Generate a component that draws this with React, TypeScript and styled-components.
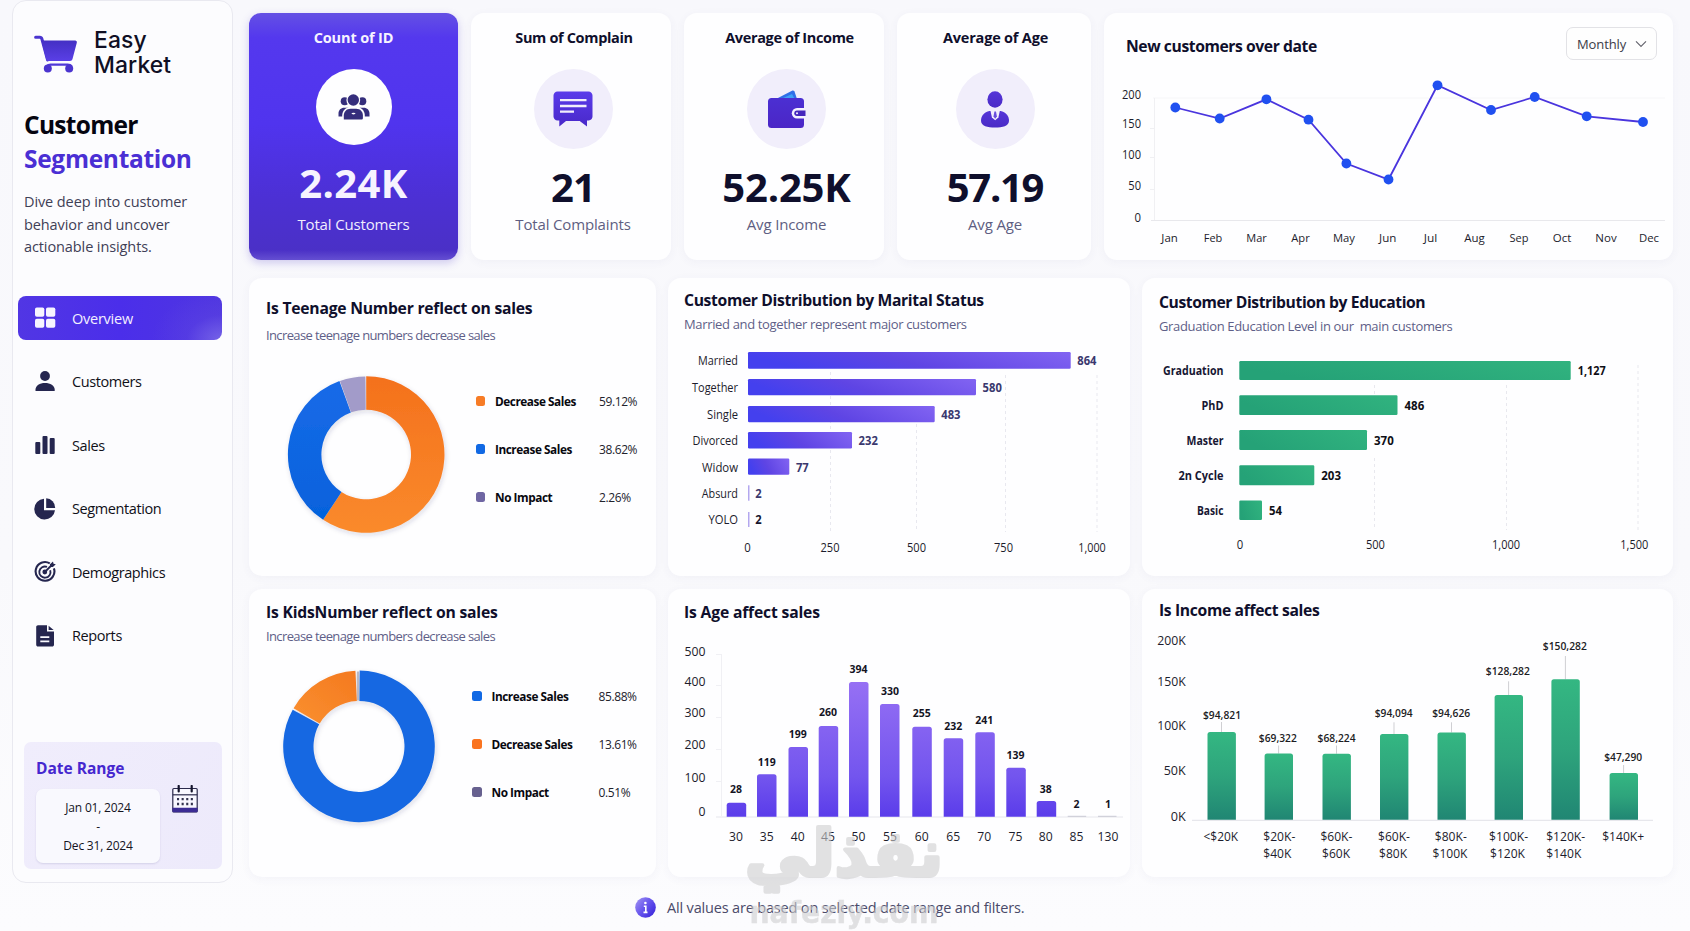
import React from 'react';
import styled, { createGlobalStyle, css } from 'styled-components';

const GlobalStyle = createGlobalStyle`
  * { box-sizing: border-box; }
  html, body { margin: 0; padding: 0; }
  body {
    font-family: 'Open Sans', 'Noto Sans', sans-serif;
    background: #fafafd;
    color: #0f0f2c;
  }
  h1, h2, h3, p, ul { margin: 0; padding: 0; }
`;

/* ---------- page ---------- */

const Page = styled.div`
  position: relative;
  display: flex;
  width: 1690px;
  height: 931px;
  overflow: hidden;
  background: linear-gradient(180deg, #f8f8fc 0%, #f9f9fc 60%, #fcfcfe 100%);
`;

const Main = styled.main`
  display: flex;
  flex-direction: column;
  width: 1425px;
  margin-left: 16px;
  padding-top: 13px;
`;

const TopRow = styled.section`
  display: grid;
  grid-template-columns: 209px 200px 200px 194px 569px;
  column-gap: 13px;
  height: 247px;
  margin-bottom: 18px;
`;

const ChartRow = styled.section<{ $h: number }>`
  display: grid;
  grid-template-columns: 407px 462px 531px;
  column-gap: 12px;
  height: ${(p) => p.$h}px;
  margin-bottom: 13px;
`;

/* ---------- sidebar ---------- */

const Sidebar = styled.aside`
  display: flex;
  flex-direction: column;
  width: 221px;
  height: 883px;
  margin-left: 12px;
  border: 1px solid #e9e9f0;
  border-radius: 14px;
  background: #fcfcfe;
`;

const Brand = styled.div`
  display: flex;
  gap: 16px;
  padding: 27px 0 0 21px;
`;

const BrandName = styled.div`
  font: 500 22.9px/25.4px Inter, sans-serif;
  letter-spacing: 0.1px;
  color: #0f0f24;
`;

const PageTitle = styled.h1`
  margin: 29.5px 0 0 11px;
  font-size: 24.5px;
  line-height: 34px;
  font-weight: 700;
  letter-spacing: -0.7px;
  color: #050510;
  span { display: block; color: #4a2fd4; letter-spacing: -0.3px; }
`;

const Intro = styled.p`
  margin: 14.5px 0 0 11px;
  width: 190px;
  font-size: 14.5px;
  line-height: 22.7px;
  letter-spacing: -0.1px;
  color: #3f4056;
`;

const Nav = styled.nav`
  display: flex;
  flex-direction: column;
  gap: 19.5px;
  margin: 37px 10px 0 5px;
`;

const NavItem = styled.a<{ $active?: boolean }>`
  display: flex;
  align-items: center;
  gap: 15px;
  height: 44px;
  padding: 1px 0 0 15px;
  border-radius: 8px;
  font-size: 14.5px;
  letter-spacing: -0.4px;
  color: #101018;
  ${(p) =>
    p.$active &&
    css`
      color: #f3f0ff;
      letter-spacing: -0.25px;
      background: radial-gradient(ellipse 70px 50px at 100% 100%, rgba(124, 107, 232, 0.85) 0%, rgba(100, 76, 226, 0.3) 50%, rgba(80, 54, 224, 0) 100%), linear-gradient(90deg, #5136e4, #4b2eea 50%, #4f36e0);
    `}
`;

const DateCard = styled.div`
  display: flex;
  justify-content: space-between;
  height: 127px;
  margin: 85px 10px 0 11px;
  padding: 16px 24px 0 12px;
  border-radius: 7px;
  background: linear-gradient(120deg, #f0edfc, #edeafb);
`;

const DateTitle = styled.h3`
  font-size: 15.5px;
  line-height: 20px;
  letter-spacing: 0;
  color: #4527cf;
`;

const DateBox = styled.div`
  width: 124px;
  height: 74px;
  margin-top: 11px;
  padding-top: 9px;
  border-radius: 7px;
  background: #f9f9fe;
  box-shadow: 0 1px 2px rgba(60, 50, 120, 0.14);
  text-align: center;
  font-size: 12px;
  font-weight: 500;
  line-height: 19px;
  letter-spacing: -0.2px;
  color: #14141f;
`;

const CalendarSlot = styled.div`
  padding-top: 27px;
`;

/* ---------- cards ---------- */

const Card = styled.article`
  display: flex;
  flex-direction: column;
  border-radius: 13px;
  background: #fefeff;
  box-shadow: 0 2px 10px rgba(70, 70, 130, 0.05);
  overflow: hidden;
`;

const KpiCard = styled(Card)<{ $primary?: boolean; $shift?: number }>`
  align-items: center;
  padding: 14px 0 0 ${(p) => p.$shift ?? 0}px;
  ${(p) =>
    p.$primary &&
    css`
      color: #f6f3ff;
      border-radius: 12px;
      background: linear-gradient(0deg, rgba(122, 104, 220, 0.55), rgba(122, 104, 220, 0) 10px),
        linear-gradient(180deg, #6450e4 0%, #5438ee 10%, #5034ee 45%, #4c30d4 75%, #4a30c4 100%);
      box-shadow: 0 3px 8px rgba(80, 60, 200, 0.25);
    `}
`;

const KpiTitle = styled.h2<{ $indent?: number; $ls: number }>`
  padding-left: ${(p) => p.$indent ?? 0}px;
  font-size: 14.5px;
  line-height: 21px;
  height: 20px;
  font-weight: 700;
  letter-spacing: ${(p) => p.$ls}px;
`;

const KpiIcon = styled.div<{ $primary?: boolean }>`
  display: flex;
  align-items: center;
  justify-content: center;
  width: ${(p) => (p.$primary ? 76 : 79)}px;
  height: ${(p) => (p.$primary ? 76 : 80)}px;
  margin: 22px 0 ${(p) => (p.$primary ? 14 : 13.5)}px;
  border-radius: 50%;
  background: ${(p) => (p.$primary ? '#fefeff' : '#f1eefb')};
`;

const KpiValue = styled.div<{ $primary?: boolean; $ls: number }>`
  font-size: 40px;
  line-height: 48px;
  font-weight: 700;
  letter-spacing: ${(p) => p.$ls}px;
  margin-bottom: ${(p) => (p.$primary ? 7 : 3.5)}px;
`;

const KpiLabel = styled.div<{ $primary?: boolean }>`
  font-size: 15px;
  line-height: 20px;
  letter-spacing: -0.15px;
  color: ${(p) => (p.$primary ? '#f1edff' : '#5e5e82')};
`;

const CardHeader = styled.header<{ $top: number; $h: number; $left?: number; $gap?: number }>`
  display: flex;
  flex-direction: column;
  gap: ${(p) => p.$gap ?? 4}px;
  flex: none;
  height: ${(p) => p.$h}px;
  padding: ${(p) => p.$top}px 0 0 ${(p) => p.$left ?? 17}px;
`;

const CardTitle = styled.h2<{ $ls?: number }>`
  font-size: 15.7px;
  line-height: 22px;
  font-weight: 700;
  letter-spacing: ${(p) => p.$ls ?? -0.3}px;
  white-space: nowrap;
`;

const CardSub = styled.p<{ $ls?: number }>`
  font-size: 13px;
  line-height: 18px;
  letter-spacing: ${(p) => p.$ls ?? -0.35}px;
  color: #5f5f88;
  white-space: pre;
`;

const TrendHeader = styled.header`
  display: flex;
  justify-content: space-between;
  align-items: flex-start;
  height: 50px;
  padding: 14px 16px 0 22px;
  ${CardTitle} { margin-top: 7.5px; }
`;

const Select = styled.button`
  display: flex;
  align-items: center;
  justify-content: space-between;
  width: 91px;
  height: 33px;
  padding: 0 9px 0 10px;
  border: 1px solid #e2e2e6;
  border-radius: 7px;
  background: #fefefe;
  font: 400 13px 'Open Sans', sans-serif;
  letter-spacing: -0.1px;
  color: #3b3b48;
`;

const Chart = styled.svg`
  display: block;
  flex: none;
  font-family: 'Open Sans', sans-serif;
`;

const DonutBody = styled.div`
  display: flex;
`;

const Legend = styled.ul<{ $top: number; $left: number }>`
  list-style: none;
  margin: ${(p) => p.$top}px 0 0 ${(p) => p.$left}px;
`;

const LegendItem = styled.li<{ $labelWidth: number }>`
  display: grid;
  grid-template-columns: 19.5px ${(p) => p.$labelWidth}px auto;
  align-items: center;
  height: 48px;
  font-size: 12px;
  font-weight: 500;
  letter-spacing: -0.4px;
  color: #22222c;
  strong { color: #08080f; font-size: 11.8px; letter-spacing: -0.45px; }
`;

const Swatch = styled.i<{ $color: string }>`
  width: 9.5px;
  height: 9.5px;
  border-radius: 2.5px;
  background: ${(p) => p.$color};
`;

const Footer = styled.footer`
  display: flex;
  align-items: center;
  gap: 11px;
  height: 34px;
  margin-left: 386px;
  font-size: 14.5px;
  letter-spacing: -0.17px;
  color: #4a4a69;
`;

const Watermark = styled.svg`
  position: absolute;
  left: 735px;
  top: 815px;
  opacity: 0.6;
  pointer-events: none;
`;

/* ---------- svg helpers ---------- */

type LabelProps = {
  x: number;
  y: number;
  w?: number;
  size?: number;
  weight?: number;
  fill?: string;
  anchor?: 'start' | 'middle' | 'end';
  children: string;
};

const Label = ({ x, y, w, size = 12, weight = 500, fill = '#1c1c2c', anchor = 'middle', children }: LabelProps) => (
  <text
    x={x}
    y={y}
    fontSize={size}
    fontWeight={weight}
    fill={fill}
    textAnchor={anchor}
    textLength={w}
    lengthAdjust={w ? 'spacingAndGlyphs' : undefined}
  >
    {children}
  </text>
);

const topRounded = (x: number, y: number, w: number, bottom: number, r = 3) =>
  `M${x} ${bottom}V${y + r}q0 ${-r} ${r} ${-r}h${w - 2 * r}q${r} 0 ${r} ${r}V${bottom}z`;

const ring = (cx: number, cy: number, R: number, r: number, from: number, to: number) => {
  const p = (a: number, rad: number) => {
    const t = (a * Math.PI) / 180;
    return `${(cx + rad * Math.sin(t)).toFixed(2)} ${(cy - rad * Math.cos(t)).toFixed(2)}`;
  };
  const big = to - from > 180 ? 1 : 0;
  return `M${p(from, R)}A${R} ${R} 0 ${big} 1 ${p(to, R)}L${p(to, r)}A${r} ${r} 0 ${big} 0 ${p(from, r)}Z`;
};

/* ---------- icons ---------- */

const INK = '#25264f';

const CartSvg = styled.svg`
  margin-top: 7px;
`;

const CartIcon = () => (
  <CartSvg width="44" height="40" viewBox="0 0 44 40">
    <defs>
      <linearGradient id="cart" x1="0" y1="0" x2="0" y2="1">
        <stop offset="0" stopColor="#4430c4" />
        <stop offset="1" stopColor="#5a3fe6" />
      </linearGradient>
    </defs>
    <path d="M1.600 2.300h4.200c1.200 0 1.800.6 2.100 1.700L13.600 25" fill="none" stroke="#4a34cf" strokeWidth="3" strokeLinecap="round" />
    <path d="M7.400 5.600h33.800c1.200 0 1.900 1 1.600 2.100l-4.300 16.200c-.3 1.300-1.200 2-2.500 2H14.400c-1.200 0-2-.7-2.300-1.800z" fill="url(#cart)" />
    <path d="M13 31.200c1-1.400 2-1.600 3.600-1.600h17c2 0 3 .2 4 1.600" fill="none" stroke="#5039d8" strokeWidth="2.200" />
    <circle cx="13.800" cy="33.600" r="4" fill="#4b34cf" />
    <circle cx="35.200" cy="33.600" r="4" fill="#4b34cf" />
  </CartSvg>
);

const GridIcon = () => (
  <svg width="24" height="24" viewBox="0 0 24 24" fill="#f6f4ff">
    <rect x="2" y="1.500" width="9.300" height="9.300" rx="1.800" />
    <rect x="13" y="1.500" width="9.300" height="9.300" rx="1.800" />
    <rect x="2" y="12.700" width="9.300" height="9" rx="1.800" />
    <rect x="13" y="12.700" width="9.300" height="9" rx="1.800" />
  </svg>
);

const PersonIcon = () => (
  <svg width="24" height="24" viewBox="0 0 24 24" fill={INK}>
    <circle cx="12" cy="6" r="4.900" />
    <path d="M2.500 21v-1.500c0-4 4.200-6.600 9.500-6.600s9.700 2.600 9.700 6.600V21z" />
  </svg>
);

const BarsIcon = () => (
  <svg width="24" height="24" viewBox="0 0 24 24" fill={INK}>
    <rect x="2.300" y="9" width="5" height="12" rx="1" />
    <rect x="9.500" y="3" width="5" height="18" rx="1" />
    <rect x="16.700" y="5" width="5" height="16" rx="1" />
  </svg>
);

const PieIcon = () => (
  <svg width="24" height="24" viewBox="0 0 24 24" fill={INK}>
    <path d="M11 1.700A10.400 10.400 0 1 0 22 13.200H11z" />
    <path d="M13.200 1.300a9.600 9.600 0 0 1 9 9.600h-9z" />
  </svg>
);

const TargetIcon = () => (
  <svg width="24" height="24" viewBox="0 0 24 24" fill="none" stroke={INK}>
    <path d="M16.800 3.300A9.400 9.400 0 1 0 20.900 8.300" strokeWidth="2.100" />
    <path d="M14 6.900a5.600 5.600 0 1 0 3.200 3.400" strokeWidth="1.900" />
    <circle cx="11.800" cy="12" r="2.400" fill={INK} stroke="none" />
    <path d="M11.800 12l7-7" strokeWidth="1.800" />
    <path d="M17 6.800V4.300l3-2.800.5 2.300 2.300.5-2.900 2.800h-2.500z" fill={INK} stroke="none" />
  </svg>
);

const FileIcon = () => (
  <svg width="24" height="24" viewBox="0 0 24 24">
    <path d="M5 1.300h9v6.200h7v13.200c0 1-.8 1.800-1.800 1.800H5c-1 0-1.800-.8-1.800-1.800V3.100c0-1 .8-1.800 1.800-1.800z" fill={INK} />
    <path d="M15.600 1.700v4.300h5z" fill={INK} />
    <path d="M7.300 13.200h9M7.300 17.400h9" stroke="#fafaff" strokeWidth="1.700" />
  </svg>
);

const CalendarIcon = () => (
  <svg width="26" height="28" viewBox="0 0 26 28" fill="none">
    <rect x=".8" y="3.500" width="24.400" height="23.500" rx="1" fill="#f8f7ff" stroke="#2b2a4c" strokeWidth="1.200" />
    <path d="M.8 9.800h24.400" stroke="#2b2a4c" strokeWidth="1.200" />
    <path d="M6.700 1v5.500M19.700 1v5.500" stroke="#15152c" strokeWidth="2.200" strokeLinecap="round" />
    <path d="M5 14.200h17M5 19h17" stroke="#34334f" strokeWidth="2.300" strokeDasharray="2.100 2.500" />
    <path d="M.4 22.800h25.200V26c0 .8-.5 1.300-1.300 1.300H1.700c-.8 0-1.300-.5-1.300-1.300z" fill="#3c2c94" />
  </svg>
);

const GroupIcon = () => (
  <svg width="32" height="28" viewBox="0 0 32 28" fill="#352e7c">
    <circle cx="6.700" cy="8.200" r="4" />
    <circle cx="24.300" cy="8.200" r="4" />
    <path d="M.5 23.500v-3c0-3.500 2.400-5.800 5.800-5.800h4v8.800zM31.500 23.500v-3c0-3.500-2.400-5.800-5.800-5.800h-4v8.800z" />
    <circle cx="15.300" cy="7" r="6.900" fill="#fefeff" />
    <circle cx="15.300" cy="7" r="5.700" />
    <path d="M4.200 28v-5.500c0-5 3.600-8.300 8.400-8.300h6c4.800 0 8.200 3.300 8.200 8.300V28z" fill="#fefeff" />
    <path d="M5.800 26.500v-4c0-4 2.800-6.800 6.800-6.800h5.600c4 0 6.700 2.800 6.700 6.800v2.500c0 1-.6 1.500-1.500 1.500z" />
    <ellipse cx="15.500" cy="20.600" rx="2" ry=".8" fill="#fefeff" />
  </svg>
);

const MessageIcon = () => (
  <svg width="40" height="36" viewBox="0 0 40 36">
    <defs>
      <linearGradient id="msg" x1="0" y1="0" x2="0" y2="1">
        <stop offset="0" stopColor="#5a3bea" />
        <stop offset="1" stopColor="#4928c9" />
      </linearGradient>
    </defs>
    <path d="M4.500.5h31c2.200 0 4 1.800 4 4v21c0 2.200-1.600 3.800-3.800 4H34v6l-7.300-5.500H13L6.300 35.500v-6H4.500c-2.200 0-4-1.800-4-4v-21c0-2.200 1.800-4 4-4z" fill="url(#msg)" />
    <path d="M7 9.200h26.500M7 15h26.500M7 20.700h14" stroke="#f1eefb" strokeWidth="2.300" />
  </svg>
);

const WalletIcon = () => (
  <svg width="40" height="38" viewBox="0 0 40 38">
    <defs>
      <linearGradient id="wal" x1="0" y1="0" x2="0" y2="1">
        <stop offset="0" stopColor="#4b2fd2" />
        <stop offset="1" stopColor="#4b26c6" />
      </linearGradient>
    </defs>
    <path d="M9 9L25 .8c1-.5 2-.2 2.500.8L30 9z" fill="#2f6fe8" />
    <path d="M13 9.500l12-5.500 3 5.500z" fill="#3fa0f6" />
    <rect x="1" y="8" width="36" height="30" rx="3.500" fill="url(#wal)" />
    <path d="M38 18h-8a5 5 0 0 0 0 10.400h8z" fill="#f4f1ff" />
    <path d="M38.500 20.600H30a2.700 2.700 0 0 0 0 5.400h8.500z" fill="#4526bd" />
    <circle cx="30" cy="23.300" r="1" fill="#f4f1ff" />
  </svg>
);

const AgentIcon = () => (
  <svg width="30" height="37" viewBox="0 0 30 37">
    <defs>
      <linearGradient id="agt" x1="0" y1="0" x2="0" y2="1">
        <stop offset="0" stopColor="#5535d8" />
        <stop offset="1" stopColor="#4a2bc6" />
      </linearGradient>
    </defs>
    <ellipse cx="15" cy="8.500" rx="7.600" ry="8.200" fill="url(#agt)" />
    <path d="M9.500 20c-5.300 1.200-8.500 4.800-8.500 9.700C1 35 7.500 36.500 15 36.500S29 35 29 29.700c0-4.900-3.200-8.500-8.500-9.700z" fill="url(#agt)" />
    <path d="M10.300 19h9.700l-1.600 7.500-3.200 2.800-3.300-2.800z" fill="#f3f0fc" />
    <path d="M14.400 20.500h1.600l.9 5-1.700 2.300-1.700-2.300z" fill="#6a50dd" />
  </svg>
);

const InfoIcon = () => (
  <svg width="21" height="21" viewBox="0 0 21 21">
    <defs>
      <linearGradient id="inf" x1="0" y1="0" x2="1" y2="0.800">
        <stop offset="0" stopColor="#a598f2" />
        <stop offset="0.500" stopColor="#6a58ee" />
        <stop offset="1" stopColor="#3c28dc" />
      </linearGradient>
    </defs>
    <circle cx="10.500" cy="10.500" r="10.300" fill="url(#inf)" />
    <circle cx="10.400" cy="6" r="1.300" fill="#fff" />
    <path d="M8.800 9.200h2v6M8.500 15.400h4" fill="none" stroke="#fff" strokeWidth="1.600" />
  </svg>
);

/* ---------- charts ---------- */

const trendPoints: [number, number][] = [
  [1175.3, 107.5], [1219.7, 118.5], [1266.4, 99.3], [1308.5, 119.7], [1346.4, 163.5], [1388.5, 179.5],
  [1437.5, 85.3], [1491, 110], [1534.7, 97], [1586.7, 116.3], [1643, 122],
];

const months: [string, number, number][] = [
  ['Jan', 1169.6, 16.5], ['Feb', 1213, 18.5], ['Mar', 1256.5, 20.5], ['Apr', 1300.5, 18.5], ['May', 1344, 22],
  ['Jun', 1387.7, 17.3], ['Jul', 1430.6, 13.5], ['Aug', 1474.6, 20.5], ['Sep', 1519, 19], ['Oct', 1562, 18.5],
  ['Nov', 1606, 21.3], ['Dec', 1649, 20],
];

const TrendChart = () => (
  <Chart width="569" height="197" viewBox="1104 63 569 197">
    <path d="M1153 98H1665" stroke="#f6f6f8" />
    <path d="M1154.500 98V220M1150 128.500h4M1150 157.500h4M1150 189.500h4" stroke="#f0f0f3" />
    <path d="M1151 220.500H1665" stroke="#e8e8ec" />
    {([['200', 98.5, 19], ['150', 128, 19], ['100', 159, 19], ['50', 190, 12.7], ['0', 221.5, 6.5]] as [string, number, number][]).map(([t, y, w]) => (
      <Label key={t} x={1141} y={y} w={w} anchor="end">{t}</Label>
    ))}
    {months.map(([t, x, w]) => (
      <Label key={t} x={x} y={242} w={w} size={11.5}>{t}</Label>
    ))}
    <polyline points={trendPoints.map((p) => p.join(',')).join(' ')} fill="none" stroke="#4a35de" strokeWidth="1.800" />
    {trendPoints.map(([x, y]) => (
      <circle key={x} cx={x} cy={y} r="4.900" fill="#2050f0" />
    ))}
  </Chart>
);

const TeenDonut = () => (
  <Chart width="226" height="226" viewBox="249 350 226 226">
    <defs>
      <linearGradient id="orangeV" x1="0" y1="0" x2="0" y2="1">
        <stop offset="0" stopColor="#f4711c" />
        <stop offset="1" stopColor="#fa8a2c" />
      </linearGradient>
      <linearGradient id="blueV" x1="0" y1="0" x2="0" y2="1">
        <stop offset="0" stopColor="#186ae8" />
        <stop offset="1" stopColor="#0562dc" />
      </linearGradient>
      <filter id="soft" x="-20%" y="-20%" width="140%" height="140%">
        <feDropShadow dx="1" dy="2" stdDeviation="2.500" floodColor="#30305a" floodOpacity="0.160" />
      </filter>
    </defs>
    <g filter="url(#soft)" strokeLinejoin="round">
      <path d={ring(366.2, 454.5, 78.3, 44.8, 0, 213.4)} fill="url(#orangeV)" />
      <path d={ring(366.2, 454.5, 78.3, 44.8, 213.400, 340)} fill="url(#blueV)" />
      <path d={ring(366.2, 454.5, 78, 44.8, 340.300, 359.400)} fill="#a29bc9" />
    </g>
  </Chart>
);

const KidsDonut = () => (
  <Chart width="223" height="218" viewBox="249 659 223 218">
    <defs>
      <linearGradient id="orangeD" x1="1" y1="0" x2="0" y2="1">
        <stop offset="0" stopColor="#f4791f" />
        <stop offset="1" stopColor="#fa9030" />
      </linearGradient>
    </defs>
    <g filter="url(#soft)">
      <path d={ring(359, 746.400, 75.800, 45.500, 0.500, 299)} fill="#1468e2" />
      <path d={ring(359, 746.400, 75.800, 45.500, 300.300, 357.300)} fill="url(#orangeD)" />
      <path d="M357 671.500h2v29h-2z" fill="#b9b9c6" />
    </g>
  </Chart>
);

const marital = [
  { label: 'Married', lw: 40, top: 352, h: 16.7, end: 1070.7, value: '864' },
  { label: 'Together', lw: 46, top: 379, h: 16.3, end: 976, value: '580' },
  { label: 'Single', lw: 31, top: 406, h: 16.3, end: 934.7, value: '483' },
  { label: 'Divorced', lw: 45.5, top: 432, h: 16.5, end: 852, value: '232' },
  { label: 'Widow', lw: 36, top: 458.5, h: 16.2, end: 789.3, value: '77' },
  { label: 'Absurd', lw: 36.3, top: 485.3, h: 15.4, end: 749, value: '2' },
  { label: 'YOLO', lw: 29.5, top: 512, h: 15, end: 749, value: '2' },
];

const MaritalChart = () => (
  <Chart width="462" height="238" viewBox="668 338 462 238">
    <defs>
      <linearGradient id="violetH" x1="0" y1="0.200" x2="1" y2="0">
        <stop offset="0" stopColor="#4440ee" />
        <stop offset="0.400" stopColor="#5f45e4" />
        <stop offset="1" stopColor="#8264f2" />
      </linearGradient>
    </defs>
    <path d="M830.500 372V532M916.500 424V532M1005.500 375V532M1097 375V532" stroke="#e8e8ef" strokeDasharray="3 3" />
    {marital.map((b, i) => {
      const base = b.top + b.h / 2 + 4.900;
      return (
        <g key={b.label}>
          <Label x={738} y={base} w={b.lw} anchor="end">{b.label}</Label>
          <rect x={748} y={b.top} width={Math.max(b.end - 748, 1.500)} height={b.h} rx={b.end < 760 ? 0 : 1.200} fill={i > 4 ? '#b3a7ef' : 'url(#violetH)'} />
          <Label x={i > 4 ? 755.300 : b.end + 6.600} y={base} w={b.value.length * 6.400} weight={700} fill={i === 6 ? '#14142e' : '#3a386e'} anchor="start">
            {b.value}
          </Label>
        </g>
      );
    })}
    {([['0', 747.5, 6.5], ['250', 830, 19], ['500', 916.5, 19], ['750', 1003.5, 19], ['1,000', 1092, 27.5]] as [string, number, number][]).map(([t, x, w]) => (
      <Label key={t} x={x} y={552.300} w={w}>{t}</Label>
    ))}
  </Chart>
);

const education = [
  { label: 'Graduation', lw: 60.5, top: 361, h: 19, end: 1570.7, value: '1,127', vw: 28 },
  { label: 'PhD', lw: 22, top: 395.3, h: 19.7, end: 1397.5, value: '486', vw: 19.7 },
  { label: 'Master', lw: 37, top: 430, h: 20, end: 1367, value: '370', vw: 19.7 },
  { label: '2n Cycle', lw: 45, top: 465.3, h: 20, end: 1314.3, value: '203', vw: 19.7 },
  { label: 'Basic', lw: 26.5, top: 500.5, h: 19.5, end: 1262, value: '54', vw: 13 },
];

const EducationChart = () => (
  <Chart width="531" height="238" viewBox="1142 338 531 238">
    <defs>
      <linearGradient id="greenH" x1="0" y1="0.300" x2="1" y2="0">
        <stop offset="0" stopColor="#25a277" />
        <stop offset="1" stopColor="#31b37f" />
      </linearGradient>
    </defs>
    <path d="M1374.500 385V395M1374.500 458V530M1506.500 385V530M1638 365V530" stroke="#e8e8ee" strokeDasharray="3 3" />
    {education.map((b) => {
      const base = b.top + b.h / 2 + 4.900;
      return (
        <g key={b.label}>
          <Label x={1223.500} y={base} w={b.lw} weight={700} anchor="end" fill="#171733">{b.label}</Label>
          <rect x={1239.300} y={b.top} width={b.end - 1239.300} height={b.h} rx={1.200} fill="url(#greenH)" />
          <Label x={b.end + 7} y={base} w={b.vw} weight={700} anchor="start" fill="#0f0f16">{b.value}</Label>
        </g>
      );
    })}
    {([['0', 1240, 6.5], ['500', 1375.4, 19], ['1,000', 1506, 28], ['1,500', 1634.3, 28]] as [string, number, number][]).map(([t, x, w]) => (
      <Label key={t} x={x} y={548.900} w={w}>{t}</Label>
    ))}
  </Chart>
);

const ages: [string, string, number, number, number, number][] = [
  // bucket, count, centre, bar left, bar top, count baseline
  ['30', '28', 736, 726.7, 802.7, 793.3],
  ['35', '119', 766.8, 757, 774.3, 765.7],
  ['40', '199', 797.8, 788.5, 747, 738],
  ['45', '260', 828, 818.7, 726, 716.3],
  ['50', '394', 858.5, 849, 682, 673],
  ['55', '330', 890, 880, 704, 694.7],
  ['60', '255', 921.8, 912.3, 726.7, 717.3],
  ['65', '232', 953.2, 943.7, 738.3, 730.3],
  ['70', '241', 984.2, 975.3, 732.3, 723.7],
  ['75', '139', 1015.500, 1006.3, 767.7, 759],
  ['80', '38', 1045.700, 1036.7, 801, 792.7],
  ['85', '2', 1076.5, 1067.7, 816, 808],
  ['130', '1', 1108, 1098, 816, 808],
];

const AgeChart = () => (
  <Chart width="462" height="248" viewBox="668 629 462 248">
    <defs>
      <linearGradient id="violetV" gradientUnits="userSpaceOnUse" x1="0" y1="682" x2="0" y2="817">
        <stop offset="0" stopColor="#9670f4" />
        <stop offset="0.700" stopColor="#7355ee" />
        <stop offset="1" stopColor="#5a3cea" />
      </linearGradient>
    </defs>
    <path d="M721.500 654V816M716 654.500h5M716 685.500h5M716 717.500h5M716 749.500h5M716 781.500h5" stroke="#f0f0f4" fill="none" />
    <path d="M716 817H1123" stroke="#e6e6ec" />
    {([['500', 656, 21], ['400', 686, 21], ['300', 717, 21], ['200', 749.3, 21], ['100', 782, 21], ['0', 815.8, 7]] as [string, number, number][]).map(([t, y, w]) => (
      <Label key={t} x={705.500} y={y} w={w} size={13} weight={400} anchor="end">{t}</Label>
    ))}
    {ages.map(([bucket, count, cx, left, top, base]) => (
      <g key={bucket}>
        {top < 810 ? <path d={topRounded(left, top, 19.5, 816.7, 2.500)} fill="url(#violetV)" /> : <path d={`M${left} 816.300h18.500`} stroke="#c9c8d4" />}
        <Label x={cx} y={base} w={count.length * 6} size={11} weight={700} fill="#14141f">{count}</Label>
        <Label x={cx} y={841.200} w={bucket.length * 6.950} size={13}>{bucket}</Label>
      </g>
    ))}
  </Chart>
);

type IncomeBar = { left: number; top: number; value: string; cx: number; base: number; stem: number; lines: [string, number, number][] };

const incomes: IncomeBar[] = [
  { left: 1207.5, top: 732, value: '$94,821', cx: 1222, base: 719, stem: 722, lines: [['<$20K', 1220.8, 34.500]] },
  { left: 1264.6, top: 753.5, value: '$69,322', cx: 1277.800, base: 742, stem: 745.500, lines: [['$20K-', 1279.3, 32], ['$40K', 1277.3, 28]] },
  { left: 1322.5, top: 753.7, value: '$68,224', cx: 1336.600, base: 742, stem: 745.500, lines: [['$60K-', 1336.400, 32], ['$60K', 1336, 28]] },
  { left: 1380, top: 734, value: '$94,094', cx: 1393.700, base: 717, stem: 722.300, lines: [['$60K-', 1394, 32], ['$80K', 1393, 28]] },
  { left: 1437.5, top: 732.5, value: '$94,626', cx: 1451.200, base: 717, stem: 722.300, lines: [['$80K-', 1450.800, 32], ['$100K', 1450, 35]] },
  { left: 1494.6, top: 695, value: '$128,282', cx: 1507.800, base: 675, stem: 681.300, lines: [['$100K-', 1508.600, 39], ['$120K', 1507.500, 35]] },
  { left: 1551.4, top: 679.3, value: '$150,282', cx: 1564.800, base: 650, stem: 656, lines: [['$120K-', 1565.700, 39], ['$140K', 1563.800, 35]] },
  { left: 1609.6, top: 773, value: '$47,290', cx: 1623.200, base: 760.7, stem: 765, lines: [['$140K+', 1623.2, 42]] },
];

const IncomeChart = () => (
  <Chart width="531" height="248" viewBox="1142 629 531 248">
    <defs>
      <linearGradient id="greenV" x1="0" y1="0" x2="0" y2="1">
        <stop offset="0" stopColor="#34b782" />
        <stop offset="0.500" stopColor="#2ea47c" />
        <stop offset="1" stopColor="#208673" />
      </linearGradient>
    </defs>
    <path d="M1192 820.300H1653" stroke="#e2e2e8" />
    {([['200K', 645.3, 28.5], ['150K', 686, 28.5], ['100K', 730, 28.5], ['50K', 775.3, 22], ['0K', 821, 15]] as [string, number, number][]).map(([t, y, w]) => (
      <Label key={t} x={1185.700} y={y} w={w} size={12.500} weight={400} anchor="end">{t}</Label>
    ))}
    {incomes.map((b) => (
      <g key={b.left}>
        <path d={`M${b.left + 14} ${b.stem}V${b.top}`} stroke="#cfcfd3" />
        <path d={topRounded(b.left, b.top, 28.4, 819.8, 2.500)} fill="url(#greenV)" />
        <Label x={b.cx} y={b.base} w={b.value.length === 7 ? 38 : 44} size={11} weight={600} fill="#1c1c24">{b.value}</Label>
        {b.lines.map(([t, x, w], i) => (
          <Label key={i} x={x} y={840.900 + i * 17.300} w={w} size={12.300}>{t}</Label>
        ))}
      </g>
    ))}
  </Chart>
);

/* ---------- app ---------- */

const navItems = [
  { label: 'Overview', icon: <GridIcon />, active: true },
  { label: 'Customers', icon: <PersonIcon /> },
  { label: 'Sales', icon: <BarsIcon /> },
  { label: 'Segmentation', icon: <PieIcon /> },
  { label: 'Demographics', icon: <TargetIcon /> },
  { label: 'Reports', icon: <FileIcon /> },
];

const kpis = [
  { title: 'Count of ID', value: '2.24K', label: 'Total Customers', icon: <GroupIcon />, primary: true, shift: 0, indent: 0, titleLs: -0.15, valueLs: 0.4 },
  { title: 'Sum of Complain', value: '21', label: 'Total Complaints', icon: <MessageIcon />, shift: 4, indent: 2, titleLs: -0.35, valueLs: -0.9 },
  { title: 'Average of Income', value: '52.25K', label: 'Avg Income', icon: <WalletIcon />, shift: 5, indent: 6, titleLs: -0.35, valueLs: -0.2 },
  { title: 'Average of Age', value: '57.19', label: 'Avg Age', icon: <AgentIcon />, shift: 2, indent: 1, titleLs: -0.2, valueLs: -1.3 },
];

const teenLegend: [string, string, string][] = [
  ['#f77c26', 'Decrease Sales', '59.12%'],
  ['#1169e4', 'Increase Sales', '38.62%'],
  ['#6f66a3', 'No Impact', '2.26%'],
];

const kidsLegend: [string, string, string][] = [
  ['#1169e4', 'Increase Sales', '85.88%'],
  ['#fa7420', 'Decrease Sales', '13.61%'],
  ['#67618f', 'No Impact', '0.51%'],
];

export default function App() {
  return (
    <Page>
      <GlobalStyle />
      <Sidebar>
        <Brand>
          <CartIcon />
          <BrandName>Easy<br />Market</BrandName>
        </Brand>
        <PageTitle>Customer<span>Segmentation</span></PageTitle>
        <Intro>Dive deep into customer<br />behavior and uncover<br />actionable insights.</Intro>
        <Nav>
          {navItems.map((n) => (
            <NavItem key={n.label} $active={n.active}>{n.icon}{n.label}</NavItem>
          ))}
        </Nav>
        <DateCard>
          <div>
            <DateTitle>Date Range</DateTitle>
            <DateBox>Jan 01, 2024<br />-<br />Dec 31, 2024</DateBox>
          </div>
          <CalendarSlot><CalendarIcon /></CalendarSlot>
        </DateCard>
      </Sidebar>

      <Main>
        <TopRow>
          {kpis.map((k) => (
            <KpiCard key={k.title} $primary={k.primary} $shift={k.shift}>
              <KpiTitle $indent={k.indent} $ls={k.titleLs}>{k.title}</KpiTitle>
              <KpiIcon $primary={k.primary}>{k.icon}</KpiIcon>
              <KpiValue $primary={k.primary} $ls={k.valueLs}>{k.value}</KpiValue>
              <KpiLabel $primary={k.primary}>{k.label}</KpiLabel>
            </KpiCard>
          ))}
          <Card>
            <TrendHeader>
              <CardTitle $ls={-0.42}>New customers over date</CardTitle>
              <Select>
                Monthly
                <svg width="12" height="8" viewBox="0 0 12 8" fill="none" stroke="#66666f" strokeWidth="1.200"><path d="M1 1.300l5 5 5-5" /></svg>
              </Select>
            </TrendHeader>
            <TrendChart />
          </Card>
        </TopRow>

        <ChartRow $h={298}>
          <Card>
            <CardHeader $top={19} $h={72} $gap={7}>
              <CardTitle $ls={-0.23}>Is Teenage Number reflect on sales</CardTitle>
              <CardSub $ls={-0.62}>Increase teenage numbers decrease sales</CardSub>
            </CardHeader>
            <DonutBody>
              <TeenDonut />
              <Legend $top={27} $left={0.5}>
                {teenLegend.map(([c, l, v]) => (
                  <LegendItem key={l} $labelWidth={104}><Swatch $color={c} /><strong>{l}</strong><span>{v}</span></LegendItem>
                ))}
              </Legend>
            </DonutBody>
          </Card>
          <Card>
            <CardHeader $top={11} $h={60} $left={16}>
              <CardTitle $ls={-0.35}>Customer Distribution by Marital Status</CardTitle>
              <CardSub>Married and together represent major customers</CardSub>
            </CardHeader>
            <MaritalChart />
          </Card>
          <Card>
            <CardHeader $top={13} $h={60}>
              <CardTitle $ls={-0.42}>Customer Distribution by Education</CardTitle>
              <CardSub>Graduation Education Level in our  main customers</CardSub>
            </CardHeader>
            <EducationChart />
          </Card>
        </ChartRow>

        <ChartRow $h={288}>
          <Card>
            <CardHeader $top={12} $h={70}>
              <CardTitle $ls={-0.2}>Is KidsNumber reflect on sales</CardTitle>
              <CardSub $ls={-0.62}>Increase teenage numbers decrease sales</CardSub>
            </CardHeader>
            <DonutBody>
              <KidsDonut />
              <Legend $top={13} $left={0}>
                {kidsLegend.map(([c, l, v]) => (
                  <LegendItem key={l} $labelWidth={107}><Swatch $color={c} /><strong>{l}</strong><span>{v}</span></LegendItem>
                ))}
              </Legend>
            </DonutBody>
          </Card>
          <Card>
            <CardHeader $top={12} $h={40} $left={16}>
              <CardTitle $ls={-0.17}>Is Age affect sales</CardTitle>
            </CardHeader>
            <AgeChart />
          </Card>
          <Card>
            <CardHeader $top={10} $h={40}>
              <CardTitle $ls={-0.35}>Is Income affect sales</CardTitle>
            </CardHeader>
            <IncomeChart />
          </Card>
        </ChartRow>

        <Footer>
          <InfoIcon />
          All values are based on selected date range and filters.
        </Footer>
      </Main>

      <Watermark
        width="220"
        height="116"
        viewBox="735 815 220 116"
        fill="#cfcfd0"
        stroke="#cfcfd0"
        strokeLinejoin="round"
        fontFamily="'DejaVu Sans', sans-serif"
        fontWeight="700"
      >
        <text x="844" y="876" fontSize="64" strokeWidth="4" textAnchor="middle" textLength="198" lengthAdjust="spacingAndGlyphs">نفذلي</text>
        <text x="844" y="923" fontSize="30" strokeWidth="0.500" textAnchor="middle" textLength="189" lengthAdjust="spacingAndGlyphs">nafezly.com</text>
      </Watermark>
    </Page>
  );
}
